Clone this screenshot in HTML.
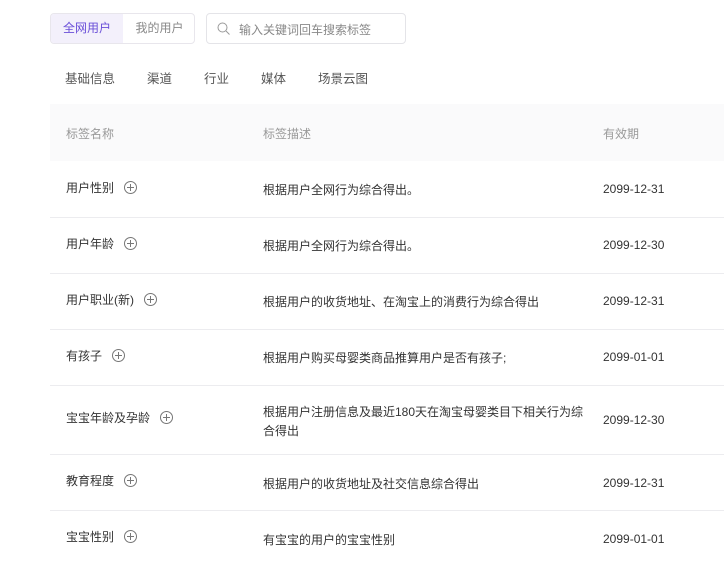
<!DOCTYPE html>
<html><head><meta charset="utf-8"><style>
body{margin:0;width:724px;height:552px;background:#fff;font-family:"Liberation Sans","Noto Sans CJK SC",sans-serif;font-size:12px;color:#333;overflow:hidden;position:relative}
.abs{position:absolute}
.seg{left:50px;top:13px;width:145px;height:31px;border:1px solid #e8e6ec;border-radius:4px;box-sizing:border-box;overflow:hidden}
.seg span{position:absolute;top:0;height:29px;line-height:29px;font-size:12px}
.search{left:206px;top:13px;width:200px;height:31px;border:1px solid #e4e4e8;border-radius:4px;box-sizing:border-box}
.tabs span{position:absolute;top:68px;font-size:12.5px;color:#555}
.head{left:50px;top:104px;width:674px;height:57px;background:#fafafb}
.head span{position:absolute;top:21px;color:#999;font-size:12px}
.row{left:50px;width:674px;border-bottom:1px solid #ececef}
.row span{position:absolute;font-size:12px;color:#333}
.plus{display:inline-block;width:11px;height:11px;border:1px solid #777;border-radius:50%;position:relative;vertical-align:-2px;margin-left:10px}
.plus:before{content:"";position:absolute;left:2px;top:5px;width:7px;height:1px;background:#777}
.plus:after{content:"";position:absolute;left:5px;top:2px;width:1px;height:7px;background:#777}
</style></head><body>
<div class="abs seg"><span style="left:0;width:72px;background:#f3f0fb;color:#6a4fd8;text-align:center">全网用户</span><span style="left:72px;width:73px;color:#888;text-align:center">我的用户</span></div>
<div class="abs search"><svg class="abs" style="left:10px;top:8px" width="13" height="13" viewBox="0 0 13 13"><circle cx="5.5" cy="5.5" r="4.5" fill="none" stroke="#999" stroke-width="1"/><line x1="9" y1="9" x2="12.5" y2="12.5" stroke="#999"/></svg><span class="abs" style="left:32px;top:7px;color:#888">输入关键词回车搜索标签</span></div>
<div class="tabs"><span style="left:65px">基础信息</span><span style="left:147px">渠道</span><span style="left:204px">行业</span><span style="left:261px">媒体</span><span style="left:318px">场景云图</span></div>
<div class="abs head"><span style="left:16px">标签名称</span><span style="left:213px">标签描述</span><span style="left:553px">有效期</span></div>
<div class="abs row" style="top:161px;height:56px"><span style="left:16px;top:18px">用户性别<i class="plus"></i></span><span style="left:213px;top:20px">根据用户全网行为综合得出。</span><span style="left:553px;top:21px">2099-12-31</span></div>
<div class="abs row" style="top:218px;height:55px"><span style="left:16px;top:17px">用户年龄<i class="plus"></i></span><span style="left:213px;top:19px">根据用户全网行为综合得出。</span><span style="left:553px;top:20px">2099-12-30</span></div>
<div class="abs row" style="top:274px;height:55px"><span style="left:16px;top:17px">用户职业(新)<i class="plus"></i></span><span style="left:213px;top:19px">根据用户的收货地址、在淘宝上的消费行为综合得出</span><span style="left:553px;top:20px">2099-12-31</span></div>
<div class="abs row" style="top:330px;height:55px"><span style="left:16px;top:17px">有孩子<i class="plus"></i></span><span style="left:213px;top:19px">根据用户购买母婴类商品推算用户是否有孩子;</span><span style="left:553px;top:20px">2099-01-01</span></div>
<div class="abs row" style="top:386px;height:68px"><span style="left:16px;top:23px">宝宝年龄及孕龄<i class="plus"></i></span><span style="left:213px;top:17px;width:330px;line-height:19px">根据用户注册信息及最近180天在淘宝母婴类目下相关行为综合得出</span><span style="left:553px;top:27px">2099-12-30</span></div>
<div class="abs row" style="top:455px;height:55px"><span style="left:16px;top:17px">教育程度<i class="plus"></i></span><span style="left:213px;top:20px">根据用户的收货地址及社交信息综合得出</span><span style="left:553px;top:21px">2099-12-31</span></div>
<div class="abs row" style="top:511px;height:55px;border:0"><span style="left:16px;top:17px">宝宝性别<i class="plus"></i></span><span style="left:213px;top:20px">有宝宝的用户的宝宝性别</span><span style="left:553px;top:21px">2099-01-01</span></div>
</body></html>
